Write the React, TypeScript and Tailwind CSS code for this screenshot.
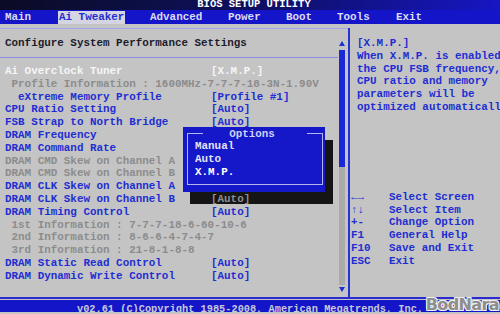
import React from "react";

type Tone = "sel" | "blue" | "gray";

type Row = {
  label: string;
  value?: string;
  tone: Tone;
  shaded?: boolean;
};

const rows: Row[] = [
  { label: "Ai Overclock Tuner", value: "[X.M.P.]", tone: "sel" },
  { label: " Profile Information : 1600MHz-7-7-7-18-3N-1.90V", tone: "gray" },
  { label: "  eXtreme Memory Profile", value: "[Profile #1]", tone: "blue" },
  { label: "CPU Ratio Setting", value: "[Auto]", tone: "blue" },
  { label: "FSB Strap to North Bridge", value: "[Auto]", tone: "blue" },
  { label: "DRAM Frequency", value: "[Auto]", tone: "blue" },
  { label: "DRAM Command Rate", value: "[Auto]", tone: "blue" },
  { label: "DRAM CMD Skew on Channel A", value: "[Auto]", tone: "gray" },
  { label: "DRAM CMD Skew on Channel B", value: "[Auto]", tone: "gray" },
  { label: "DRAM CLK Skew on Channel A", value: "[Auto]", tone: "blue" },
  { label: "DRAM CLK Skew on Channel B", value: "[Auto]", tone: "blue", shaded: true },
  { label: "DRAM Timing Control", value: "[Auto]", tone: "blue" },
  { label: " 1st Information : 7-7-7-18-6-60-10-6", tone: "gray" },
  { label: " 2nd Information : 8-6-6-4-7-4-7", tone: "gray" },
  { label: " 3rd Information : 21-8-1-8-8", tone: "gray" },
  { label: "DRAM Static Read Control", value: "[Auto]", tone: "blue" },
  { label: "DRAM Dynamic Write Control", value: "[Auto]", tone: "blue" },
];

const help = [
  "[X.M.P.]",
  "When X.M.P. is enabled",
  "the CPU FSB frequency,",
  "CPU ratio and memory",
  "parameters will be",
  "optimized automatically",
];

const keys: [string, string][] = [
  ["←→", "Select Screen"],
  ["↑↓", "Select Item"],
  ["+-", "Change Option"],
  ["F1", "General Help"],
  ["F10", "Save and Exit"],
  ["ESC", "Exit"],
];

function toneClass(tone: Tone) {
  if (tone === "sel") return "text-[#f6f6f6]";
  if (tone === "gray") return "text-[#8c8c8c]";
  return "text-[#1e2ed2]";
}

export default function App() {
  return (
    <div className="relative flex h-[314px] w-[500px] flex-col overflow-hidden bg-[#c4c4c4] font-['Liberation_Mono','DejaVu_Sans_Mono',monospace] text-[10.9px] font-bold">
      {/* title */}
      <div className="flex h-[10px] items-start justify-center whitespace-pre bg-gradient-to-r from-[#0b0b24] via-[#0e0e60] to-[#1616c4] pl-[8px] text-[10.5px] leading-[9px] text-white">
        BIOS SETUP UTILITY
      </div>

      {/* menu */}
      <div className="flex h-[14px] items-center whitespace-pre bg-[#1414c8] pl-[5px] leading-[14px] text-[#dcdcf2]">
        <span className="w-[53px] shrink-0">Main</span>
        <span className="h-[13px] w-[67px] shrink-0 bg-[#d4d4e2] pl-[1px] leading-[13px] text-[#1e2ed2]">Ai Tweaker</span>
        <span className="ml-[25px] w-[78px] shrink-0">Advanced</span>
        <span className="w-[58px] shrink-0">Power</span>
        <span className="w-[51px] shrink-0">Boot</span>
        <span className="w-[59px] shrink-0">Tools</span>
        <span>Exit</span>
      </div>

      {/* body */}
      <div className="flex h-[275px] flex-col border-b-2 border-[#2a2ad0] pt-[4px]">
        <div className="flex flex-1">
          <div className="flex w-[348px] border-t border-[#a4a4e6]">
            <div className="flex w-[338px] flex-col">
              <div className="h-[29px] border-b border-[#8c8ce2] pl-[5px] pt-[8px] leading-[12.8px] text-[#1c1c2c]">
                Configure System Performance Settings
              </div>
              <div className="mt-[7px] flex flex-col">
                {rows.map((r) => (
                  <div key={r.label} className={`flex h-[12.8px] whitespace-pre pl-[5px] leading-[12.8px] ${toneClass(r.tone)}`}>
                    <span className={r.value ? "w-[206px] shrink-0" : ""}>{r.label}</span>
                    {r.value ? (
                      <span className={r.shaded ? "relative z-20 text-[#8e8e8e]" : ""}>{r.value}</span>
                    ) : null}
                  </div>
                ))}
              </div>
            </div>

            {/* scrollbar */}
            <div className="mt-[11px] flex h-[254px] w-[7px] flex-col items-center">
              <svg width="6" height="5" viewBox="0 0 6 5" className="mt-[1px]">
                <path d="M3 0 L6 5 L0 5 Z" fill="#1e2ed2" />
              </svg>
              <div className="mt-[4px] h-[117px] w-[6px] bg-[#1a28d6]" />
              <div className="h-[118px] w-[6px] bg-[#ababab]" />
              <svg width="6" height="5" viewBox="0 0 6 5" className="mt-[2px]">
                <path d="M0 0 L6 0 L3 5 Z" fill="#1e2ed2" />
              </svg>
            </div>
          </div>

          {/* help panel */}
          <div className="flex flex-1 flex-col overflow-hidden border-l-2 border-[#2434d4] pt-[9px] leading-[12.8px] text-[#1e2ed2]">
            <div className="flex flex-col pl-[7px]">
              {help.map((h) => (
                <div key={h} className="h-[12.8px] whitespace-pre">{h}</div>
              ))}
            </div>
            <div className="mt-[77px] flex flex-col pl-[1px]">
              {keys.map(([k, d]) => (
                <div key={k} className="flex h-[12.8px] whitespace-pre">
                  <span className="w-[38px] shrink-0">{k}</span>
                  <span>{d}</span>
                </div>
              ))}
            </div>
          </div>
        </div>
      </div>

      {/* footer */}
      <div className="mt-[1px] h-[12px] overflow-hidden whitespace-pre bg-[#1414c8] pt-[3px] text-center text-[10.3px] leading-[12px] text-[#c8c8dc]">
        v02.61 (C)Copyright 1985-2008, American Megatrends, Inc.
      </div>

      {/* options popup */}
      <div className="absolute left-[190px] top-[140px] z-10 h-[64px] w-[143px] bg-[#151515]" />
      <div className="absolute left-[183px] top-[127px] z-30 h-[65px] w-[142px] bg-[#1418c8] leading-[12.8px]">
        <div className="absolute bottom-[7px] left-[4px] right-[2px] top-[7px] border-x border-b border-[#b4b4ee]" />
        <div className="mt-[0.6px] flex h-[12.8px] items-center">
          <div className="ml-[4px] h-px w-[16px] bg-[#b4b4ee]" />
          <span className="flex-1 pr-[6px] text-center text-[#cfd0f4]">Options</span>
          <div className="mr-[2px] h-px w-[16px] bg-[#b4b4ee]" />
        </div>
        <div className="flex flex-col pl-[12px]">
          <span className="h-[12.8px] text-[#e2e2f4]">Manual</span>
          <span className="h-[12.8px] text-[#e2e2f4]">Auto</span>
          <span className="h-[12.8px] text-white">X.M.P.</span>
        </div>
      </div>

      {/* watermark */}
      <div className="absolute bottom-[-3px] right-[1px] z-40 font-['DejaVu_Sans',sans-serif] text-[16px] font-black tracking-[-0.6px] text-[#8e8e8e] [text-shadow:1px_1px_0_#f0f0f0,-1px_-1px_0_#f0f0f0,1px_-1px_0_#f0f0f0,-1px_1px_0_#f0f0f0]">
        BodNara
      </div>
    </div>
  );
}
